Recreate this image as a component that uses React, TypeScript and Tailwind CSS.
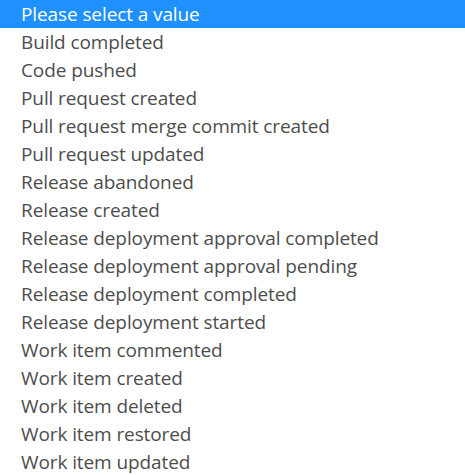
const options = [
  "Please select a value",
  "Build completed",
  "Code pushed",
  "Pull request created",
  "Pull request merge commit created",
  "Pull request updated",
  "Release abandoned",
  "Release created",
  "Release deployment approval completed",
  "Release deployment approval pending",
  "Release deployment completed",
  "Release deployment started",
  "Work item commented",
  "Work item created",
  "Work item deleted",
  "Work item restored",
  "Work item updated",
];

export default function App() {
  return (
    <div className="h-[475px] w-[465px] overflow-hidden bg-white font-['Open_Sans',sans-serif]">
      <ul>
        {options.map((option, i) => (
          <li
            key={option}
            className={
              i === 0
                ? "flex h-[28px] items-center bg-[#1e90ff] pl-[21px] text-[19px] tracking-[-0.1px] text-white"
                : "flex h-[28px] items-center pl-[21px] text-[19px] tracking-[-0.1px] text-[#4d4d4d]"
            }
          >
            {option}
          </li>
        ))}
      </ul>
    </div>
  );
}
